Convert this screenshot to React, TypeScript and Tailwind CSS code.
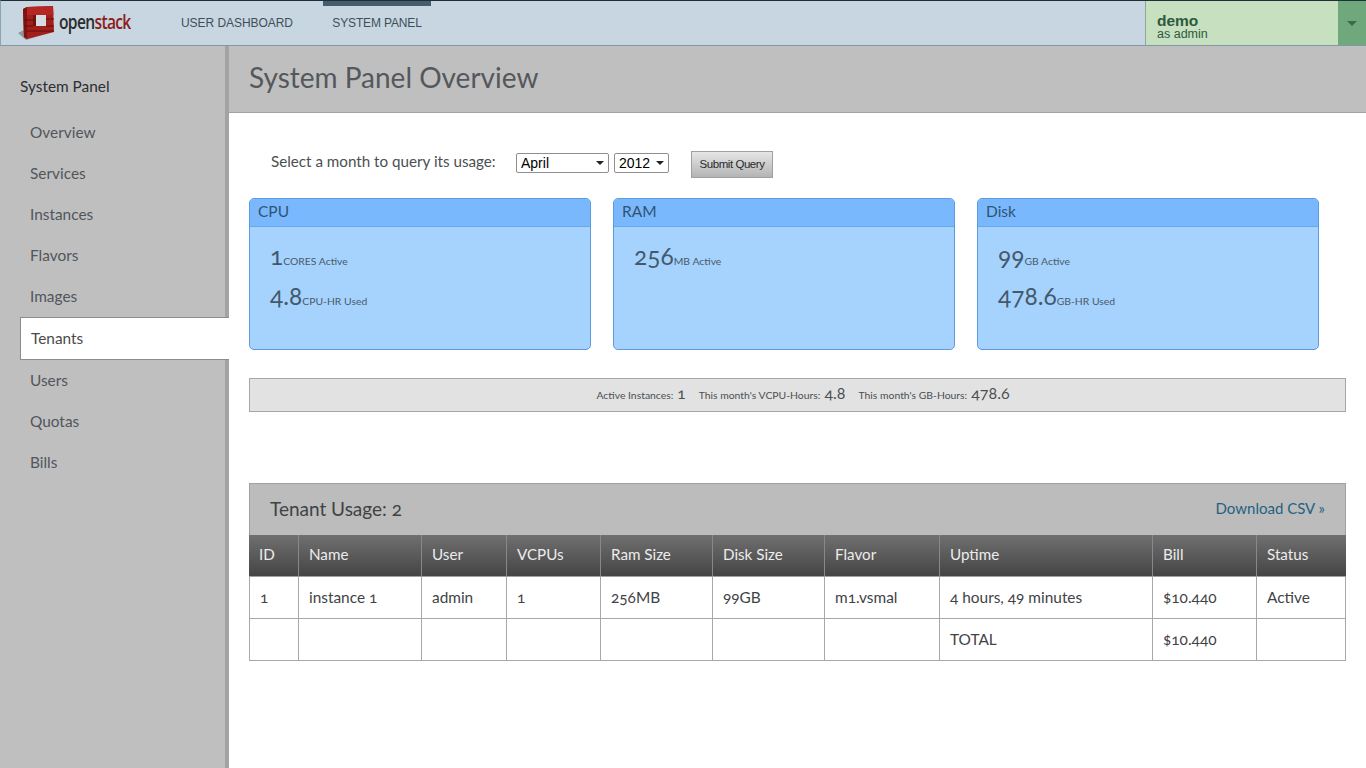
import React from "react";

const font = "font-['Lato','Noto_Sans',sans-serif]";

const nav = ["Overview", "Services", "Instances", "Flavors", "Images", "Tenants", "Users", "Quotas", "Bills"];

const cols = [
  { w: "w-[49px]", h: "ID", a: "1", b: "" },
  { w: "w-[123px]", h: "Name", a: "instance 1", b: "" },
  { w: "w-[85px]", h: "User", a: "admin", b: "" },
  { w: "w-[94px]", h: "VCPUs", a: "1", b: "" },
  { w: "w-[112px]", h: "Ram Size", a: "256MB", b: "" },
  { w: "w-[112px]", h: "Disk Size", a: "99GB", b: "" },
  { w: "w-[115px]", h: "Flavor", a: "m1.vsmal", b: "" },
  { w: "w-[213px]", h: "Uptime", a: "4 hours, 49 minutes", b: "TOTAL" },
  { w: "w-[104px]", h: "Bill", a: "$10.440", b: "$10.440" },
  { w: "flex-1", h: "Status", a: "Active", b: "" },
];

function Logo() {
  return (
    <svg width="38" height="36" viewBox="0 0 38 36" className="shrink-0">
      <path d="M0 28 L6 25 L24 30 L8 35 Z" fill="#7d8186" opacity="0.75" />
      <path d="M5 4 L9 2 L35 1 L36 27 L9 34 L6 32 Z" fill="#a31f1b" />
      <path d="M9 2 L35 1 L35.5 10 L8 10 Z" fill="#b52722" />
      <path d="M5 4 L9 2 L9 34 L6 32 Z" fill="#7c1411" />
      <path d="M15 10 H28 V21 H15 Z" fill="#d3dde2" />
      <path d="M15 10 H18 V21 H15 Z" fill="#6e110f" />
      <path d="M6 15 H15 M28 14 H36 M6 21 H15 M28 21 H36 M9 26 H36" stroke="#5e0f0d" strokeWidth="1" />
    </svg>
  );
}

function Card({ title, rows, last }: { title: string; rows: [string, string][]; last?: boolean }) {
  return (
    <div className={`w-[342px] h-[152px] rounded-[5px] border border-[#5d9ae0] bg-[#a5d3fe] overflow-hidden ${last ? "" : "mr-[22px]"}`}>
      <div className="h-[28px] bg-[#7ab8fd] border-b border-[#6aa6ea] pl-[8px] text-[15.5px] leading-[25px] text-[#2f5472]">{title}</div>
      <div className="pl-[20px] pt-[15px] flex flex-col gap-[13px]">
        {rows.map(([n, l]) => (
          <div key={l} className="h-[27px] flex items-baseline text-[#44596b]">
            <span className="text-[24.5px] leading-[27px] oldstyle-nums">{n}</span>
            <span className="text-[10.4px] text-[#4a5a68]">{l}</span>
          </div>
        ))}
      </div>
    </div>
  );
}

export default function App() {
  return (
    <div className={`w-[1366px] h-[768px] overflow-hidden flex flex-col bg-white ${font}`}>
      <header className="h-[46px] shrink-0 flex bg-[#c7d6e1] border-t border-t-[#1f2f38] border-b border-b-[#7f9aa6] border-l border-l-[#8aa4b0]">
        <div className="w-[180px] flex items-center pl-[17px] gap-[3px]">
          <Logo />
          <span className="font-['Open_Sans',sans-serif] font-semibold text-[19px] tracking-[-0.8px] scale-x-[0.82] origin-left whitespace-nowrap pb-[1px]">
            <span className="text-[#2b2b2b]">open</span>
            <span className="text-[#8e1b18]">stack</span>
          </span>
        </div>
        <nav className="flex font-['Liberation_Sans',sans-serif] text-[12px] tracking-[-0.05px] text-[#3f4f59]">
          <div className="w-[142px] flex items-center h-[44px]">USER DASHBOARD</div>
          <div className="w-[108px] h-[44px] flex items-center justify-center border-t-[5px] border-t-[#445e6c] pb-[5px] tracking-[-0.15px]">SYSTEM PANEL</div>
        </nav>
        <div className="flex-1" />
        <div className="w-[193px] bg-[#c6e0c0] border-l border-l-[#8fa79a] pl-[11px] pt-[12px] font-['Liberation_Sans',sans-serif] flex flex-col text-[#2d5a3d]">
          <div className="text-[15.5px] leading-[15px] font-bold">demo</div>
          <div className="text-[12.5px] leading-[12px]">as admin</div>
        </div>
        <div className="w-[28px] bg-[#6fa87a] flex items-center justify-center">
          <div className="w-0 h-0 border-l-[5px] border-r-[5px] border-t-[5px] border-l-transparent border-r-transparent border-t-[#3f6a4a]" />
        </div>
      </header>

      <div className="flex-1 flex min-h-0">
        <aside className="w-[229px] shrink-0 bg-[#bfbfbf] border-r-[4px] border-r-[#a3a3a3] relative">
          <div className="pl-[20px] pt-[30px] text-[15.4px] leading-[20px] text-[#2b2f33]">System Panel</div>
          <ul className="mt-[16px] flex flex-col">
            {nav.map((n) =>
              n === "Tenants" ? (
                <li key={n} className="h-[43px] ml-[20px] -mr-[4px] pl-[10px] flex items-center bg-white border border-r-0 border-[#8c8c8c] text-[15.4px] text-[#4a4a4a] relative z-10">
                  {n}
                </li>
              ) : (
                <li key={n} className="h-[41px] pl-[30px] flex items-center text-[15.4px] text-[#51565c]">
                  {n}
                </li>
              )
            )}
          </ul>
        </aside>

        <main className="flex-1 min-w-0">
          <div className="h-[67px] bg-[#bfbfbf] border-b border-b-[#a3a3a3] pl-[20px] pb-[5px] flex items-center text-[28px] text-[#54585c]">
            System Panel Overview
          </div>
          <div className="pl-[20px] pr-[20px]">
            <form className="h-[85px] pt-[38px] flex items-start">
              <span className="ml-[22px] w-[245px] -mt-[1px] text-[15.2px] leading-[22px] text-[#4b4f52]">Select a month to query its usage:</span>
              <select defaultValue="April" className="mt-[2px] w-[93px] h-[20px] appearance-none bg-white border border-[#8f8f8f] rounded-[2px] pl-[4px] text-[14px] leading-[18px] text-black font-['Liberation_Sans',sans-serif]"><option>April</option></select>
              <span className="relative w-0"><span className="absolute left-[-13px] top-[10px] w-0 h-0 border-l-[4px] border-r-[4px] border-t-[4px] border-l-transparent border-r-transparent border-t-[#222]" /></span>
              <select defaultValue="2012" className="mt-[2px] ml-[5px] w-[55px] h-[20px] appearance-none bg-white border border-[#8f8f8f] rounded-[2px] pl-[4px] text-[14px] leading-[18px] text-black font-['Liberation_Sans',sans-serif]"><option>2012</option></select>
              <span className="relative w-0"><span className="absolute left-[-13px] top-[10px] w-0 h-0 border-l-[4px] border-r-[4px] border-t-[4px] border-l-transparent border-r-transparent border-t-[#222]" /></span>
              <button type="button" className="ml-[22px] w-[82px] h-[27px] border border-[#a0a0a0] bg-gradient-to-b from-[#e6e6e6] to-[#b4b4b4] text-[11.5px] tracking-[-0.45px] text-[#2a2a2a] font-['Liberation_Sans',sans-serif]">Submit Query</button>
            </form>
            <div className="flex">
              <Card title="CPU" rows={[["1", "CORES Active"], ["4.8", "CPU-HR Used"]]} />
              <Card title="RAM" rows={[["256", "MB Active"]]} />
              <Card title="Disk" last rows={[["99", "GB Active"], ["478.6", "GB-HR Used"]]} />
            </div>
            <div className="mt-[28px] h-[34px] w-[1097px] bg-[#e2e2e2] border border-[#a6a6a6] flex items-center justify-center text-[#4b4f52]">
              <div className="flex items-baseline pb-[3px] pl-[11px]">
                <span className="text-[10.4px]">Active Instances:</span><span className="ml-[4px] text-[15.5px] oldstyle-nums">1</span>
                <span className="ml-[13px] text-[10.4px]">This month's VCPU-Hours:</span><span className="ml-[4px] text-[16px] oldstyle-nums">4.8</span>
                <span className="ml-[13px] text-[10.4px]">This month's GB-Hours:</span><span className="ml-[4px] text-[16px] oldstyle-nums">478.6</span>
              </div>
            </div>
            <section className="mt-[71px] w-[1097px]">
              <div className="h-[52px] bg-[#bcbcbc] border border-[#a0a0a0] border-b-0 px-[20px] flex items-center justify-between">
                <span className="text-[19px] text-[#3f4346] oldstyle-nums">Tenant Usage: 2</span>
                <span className="text-[15px] pb-[2px] text-[#1f6283]">Download CSV »</span>
              </div>
              <div className="flex h-[42px] bg-gradient-to-b from-[#707070] to-[#454545] border-b border-b-[#a0a0a0]">
                {cols.map((c, i) => (
                  <div key={c.h} className={`${c.w} ${i ? "border-l border-l-[#888]" : ""} pl-[10px] pb-[2px] flex items-center text-[15.2px] text-[#ececec]`}>{c.h}</div>
                ))}
              </div>
              {(["a", "b"] as const).map((k) => (
                <div key={k} className="flex h-[42px] border-b border-b-[#a8a8a8] border-l border-l-[#a8a8a8] border-r border-r-[#a8a8a8]">
                  {cols.map((c, i) => (
                    <div key={c.h} className={`${i === 0 ? "w-[48px]" : c.w} ${i ? "border-l border-l-[#a8a8a8]" : ""} pl-[10px] flex items-center text-[15.4px] text-[#3f4346] oldstyle-nums`}>{c[k]}</div>
                  ))}
                </div>
              ))}
            </section>
          </div>
        </main>
      </div>
    </div>
  );
}
